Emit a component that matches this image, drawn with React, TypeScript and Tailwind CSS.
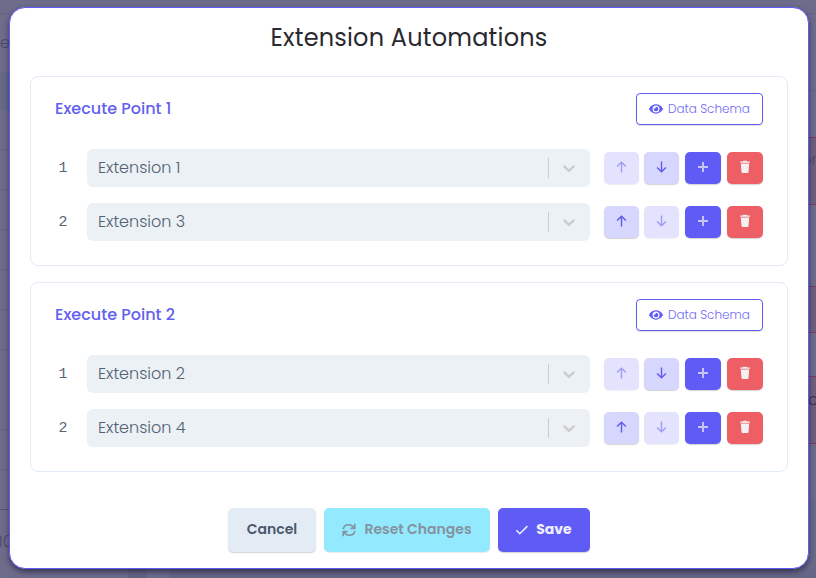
import type { ReactNode } from 'react'
import { FaEye } from 'react-icons/fa'

const executePoints = [
  { name: 'Execute Point 1', extensions: ['Extension 1', 'Extension 3'] },
  { name: 'Execute Point 2', extensions: ['Extension 2', 'Extension 4'] }
]

function ChevronDown() {
  return (
    <svg width="20" height="20" viewBox="0 0 20 20" fill="currentColor">
      <path d="M4.516 7.548c0.436-0.446 1.043-0.481 1.576 0l3.908 3.747 3.908-3.747c0.533-0.481 1.141-0.446 1.574 0 0.436 0.445 0.408 1.197 0 1.615-0.406 0.418-4.695 4.502-4.695 4.502-0.217 0.223-0.502 0.335-0.787 0.335s-0.57-0.112-0.789-0.335c0 0-4.287-4.084-4.695-4.502s-0.436-1.17 0-1.615z" />
    </svg>
  )
}

function ArrowIcon({ down = false }: { down?: boolean }) {
  return (
    <svg
      width="11"
      height="12"
      viewBox="0 0 11 12"
      fill="none"
      stroke="currentColor"
      strokeWidth="1.4"
      className={down ? 'rotate-180' : ''}
    >
      <path d="M5.5 11.4V1.4M1.1 5.6l4.4-4.3 4.4 4.3" />
    </svg>
  )
}

function PlusIcon() {
  return (
    <svg width="10" height="10" viewBox="0 0 10 10" fill="none" stroke="currentColor" strokeWidth="2">
      <path d="M5 0v10M0 5h10" />
    </svg>
  )
}

function TrashIcon() {
  return (
    <svg width="12" height="14" viewBox="0 0 12 14" fill="currentColor">
      <path d="M4.2 0.8h3.6l0.4 0.6h2.7v1.3H1.1V1.4h2.7z" />
      <path d="M1.8 3.5h8.4L9.5 12c0 .6-.4.9-.9.9H3.4c-.5 0-.9-.3-.9-.9z" />
    </svg>
  )
}

function ResetIcon() {
  return (
    <svg width="14" height="14" viewBox="0 0 14 14" fill="none" stroke="currentColor" strokeWidth="1.6">
      <path d="M1.2 6.2C1.6 3.4 4 1.7 6.8 1.7c2.2 0 3.8 1 5.2 2.9M12.8 0.8v4.6H8.4" />
      <path d="M12.8 7.8c-.4 2.8-2.8 4.5-5.6 4.5-2.2 0-3.8-1-5.2-2.9M1.2 13.2V8.6h4.4" />
    </svg>
  )
}

function CheckIcon() {
  return (
    <svg width="14" height="12" viewBox="0 0 14 12" fill="none" stroke="currentColor" strokeWidth="1.5">
      <path d="M1.3 6.2l3.5 3.5 7.6-7.6" />
    </svg>
  )
}

function IconButton({ className, children }: { className: string; children: ReactNode }) {
  return (
    <button
      className={`flex h-8 items-center justify-center rounded-[5px] ${className}`}
    >
      {children}
    </button>
  )
}

function ExtensionRow({ index, name, count }: { index: number; name: string; count: number }) {
  const enabled = 'bg-[#d7d6fd] text-[#5f5bf0] shadow-[0_1px_1px_rgba(40,40,60,0.2)]'
  const disabled = 'bg-[#e4e3fe] text-[#9f9cf8] shadow-[0_1px_1px_rgba(40,40,60,0.08)]'

  return (
    <div className="flex h-[38px] items-center">
      <span className="w-8 pt-0.5 pl-[3.5px] font-['Liberation_Mono',monospace] text-[15px] text-[#5a6675]">{index + 1}</span>
      <div className="flex h-full w-[503px] items-center rounded-md bg-[#ecf1f5] pl-[11px] pr-[11px]">
        <span className="grow whitespace-nowrap text-base font-light text-[#526173]">{name}</span>
        <span className="h-5 w-px bg-[#cccccc]" />
        <span className="ml-2.5 text-[#cccccc]">
          <ChevronDown />
        </span>
      </div>
      <div className="ml-3.5 flex">
        <IconButton className={`w-[35px] pb-0.5 ${index === 0 ? disabled : enabled}`}>
          <ArrowIcon />
        </IconButton>
        <IconButton className={`ml-[5px] w-[35px] pb-0.5 ${index === count - 1 ? disabled : enabled}`}>
          <ArrowIcon down />
        </IconButton>
        <IconButton className="ml-1.5 w-9 bg-[#5f5cf6] pb-0.5 text-[#c6c5fa] shadow-[0_1px_1px_rgba(40,40,60,0.2)]">
          <PlusIcon />
        </IconButton>
        <IconButton className="ml-1.5 w-9 bg-[#ee5f65] pb-0.5 text-[#f4f1f2] shadow-[0_1px_1px_rgba(40,40,60,0.2)]">
          <TrashIcon />
        </IconButton>
      </div>
    </div>
  )
}

/* Page that sits under the dimmed overlay */
function DimmedPage() {
  return (
    <div className="flex h-[578px] flex-col bg-[#6e6c8b]">
      <div className="flex h-[569px] justify-between text-base font-light text-[#4c4968]">
        <div className="w-6">
          <div className="h-3.5 border-b border-[#666483]" />
          <div className="h-[58px] pt-[17px] leading-6">e</div>
          <div className="h-[38px] bg-[#656887]" />
          <div className="h-10 border-b border-[#666483]" />
          <div className="h-10 border-b border-[#666483]" />
          <div className="h-10 border-b border-[#666483]" />
          <div className="h-10 border-b border-[#666483]" />
          <div className="h-10 border-b border-[#666483]" />
          <div className="h-10 border-b border-[#666483]" />
          <div className="h-20 border-b border-[#666483]" />
          <div className="h-10 border-b border-[#666483]" />
          <div className="h-10 border-b border-[#565474]" />
          <div className="-ml-[2px] pt-5 leading-6">10</div>
        </div>
        <div className="w-4 whitespace-nowrap">
          <div className="h-3.5 border-b border-[#666483]" />
          <div className="h-[77px] border-b border-[#666483]" />
          <div className="h-[46px]" />
          <div className="h-[68px] border-y border-[#793a5d] bg-[#6e607d] pt-2.5 pl-px leading-6">or</div>
          <div className="h-[81px]" />
          <div className="h-[47px] border-y border-[#793a5d] bg-[#6e607d]" />
          <div className="h-[43px]" />
          <div className="h-[68px] border-y border-[#793a5d] bg-[#6e607d] pt-[11px] pl-2 leading-6 text-[#35304f]">o</div>
          <div className="h-[55px]" />
          <div className="h-[70px] bg-[#67698a]" />
        </div>
      </div>
      <div className="flex h-[9px]">
        <div className="w-32" />
        <div className="w-[18px] bg-[#666484]" />
        <div className="w-6" />
        <div className="grow bg-[#676686]" />
      </div>
    </div>
  )
}

export default function App() {
  return (
    <div className="relative h-[578px] w-[816px] overflow-hidden font-['Poppins','Inter',sans-serif]">
      <DimmedPage />

      <div className="absolute left-[9px] top-[7px] flex h-[562px] w-[800px] flex-col rounded-2xl border border-[#5f5cf6] bg-white px-5 shadow-[0_3px_6px_-1px_rgba(20,18,45,0.75)]">
        <h2 className="mt-3 text-center text-2xl leading-9 tracking-[0.2px] text-[#29292f]">
          Extension Automations
        </h2>

        {/* Execute points */}
        <div className="mt-5 flex flex-col gap-4">
          {executePoints.map((point) => (
            <section key={point.name} className="h-[190px] rounded-lg border border-[#e3ebf6] px-6 pt-4">
              <div className="flex h-8 items-center justify-between">
                <h3 className="text-base font-medium text-[#6360ee]">{point.name}</h3>
                <button className="flex h-8 w-[127px] items-center rounded border border-[#5f5cf6] pl-3 text-xs font-light text-[#6f6cf5] shadow-[0_1px_1px_rgba(40,40,60,0.15)]">
                  <FaEye size={14} className="mr-[5px] text-[#5f5cf6]" />
                  Data Schema
                </button>
              </div>
              <div className="mt-6 flex flex-col gap-4">
                {point.extensions.map((extension, index) => (
                  <ExtensionRow key={extension} index={index} name={extension} count={point.extensions.length} />
                ))}
              </div>
            </section>
          ))}
        </div>

        {/* Footer */}
        <div className="mt-9 flex justify-center gap-2 text-sm font-semibold">
          <button className="h-11 w-[88px] rounded-[5px] bg-[#e3ebf5] pb-0.5 text-[#4a586c] shadow-[0_1px_1px_rgba(40,40,60,0.2)]">
            Cancel
          </button>
          <button className="flex h-11 w-[166px] items-center justify-center rounded-[5px] bg-[#93e9fe] pb-0.5 text-[#84939f] shadow-[0_1px_1px_rgba(40,40,60,0.1)]">
            <span className="mr-2 pt-0.5">
              <ResetIcon />
            </span>
            Reset Changes
          </button>
          <button className="flex h-11 w-[92px] items-center justify-center rounded-[5px] bg-[#5f5cf6] pr-px pb-0.5 font-bold text-[#f0effe] shadow-[0_1px_1px_rgba(40,40,60,0.2)]">
            <span className="mr-[7px] pt-0.5">
              <CheckIcon />
            </span>
            Save
          </button>
        </div>
      </div>
    </div>
  )
}
